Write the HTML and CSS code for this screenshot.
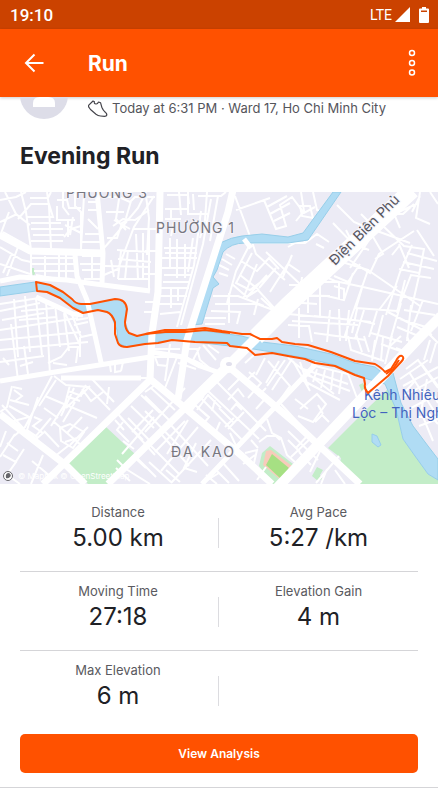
FILE: index.html
```html
<!DOCTYPE html>
<html lang="en">
<head>
  <meta charset="UTF-8">
  <meta name="viewport" content="width=device-width, initial-scale=1.0">
  <title>Run</title>
  <link rel="stylesheet" href="styles.css">
</head>
<body>
  <!-- Phone status bar -->
  <div class="status-bar">
    <span class="clock">19:10</span>
    <div class="status-icons">
      <span class="network">LTE</span>
      <svg width="15" height="15" viewBox="0 0 15 15" aria-hidden="true"><path d="M15 0v15H0z" fill="#fff"/></svg>
      <svg class="battery" width="10" height="16" viewBox="0 0 10 16" aria-hidden="true"><path d="M3 0h4v1.500h2q1 0 1 1V15q0 1-1 1H1q-1 0-1-1V2.500q0-1 1-1h2z" fill="#fff"/><path d="M2 3.500h6v1.500H2z" fill="#cb4200"/></svg>
    </div>
  </div>

  <header class="toolbar">
    <button class="icon-button" type="button" aria-label="Back">
      <svg width="20" height="20" viewBox="0 0 20 20" aria-hidden="true"><path d="M19.500 10H2M10.500 1.500L2 10l8.500 8.500" fill="none" stroke="#fff" stroke-width="2"/></svg>
    </button>
    <h1>Run</h1>
    <button class="icon-button" type="button" aria-label="More options">
      <svg width="8" height="28" viewBox="0 0 8 28" aria-hidden="true"><g fill="none" stroke="#fff" stroke-width="1.500"><circle cx="4" cy="4" r="2.500"/><circle cx="4" cy="14" r="2.500"/><circle cx="4" cy="23.500" r="2.500"/></g></svg>
    </button>
  </header>

  <main>
    <!-- Athlete and activity details -->
    <div class="athlete">
      <svg class="avatar" width="48" height="48" viewBox="0 0 48 48" aria-hidden="true"><circle cx="24" cy="24" r="24" fill="#dddde8"/><circle cx="24" cy="17" r="7" fill="#fff"/><path d="M13 36v-4q0-6 7-6h8q7 0 7 6v4z" fill="#fff"/></svg>
      <div class="details">
        <svg width="20" height="17" viewBox="0 0 20 17" aria-hidden="true"><path d="M5 1L.8 5.200q-.6.800 0 2L2.500 9.500 8 14.200q2 1.600 4.500 1.800l4 .3q2 0 2.300-1.300.2-1.300-1.300-2.500Q14.800 10 13.800 7.200L12.600 2.800 10.500 2Q9.500 4.200 8 4 5.800 3.800 6.400 1.800z" fill="none" stroke="#44444b" stroke-width="1.200" stroke-linejoin="round"/></svg>
        <span>Today at 6:31 PM · Ward 17, Ho Chi Minh City</span>
      </div>
    </div>
    <h2 class="title">Evening Run</h2>

    <svg class="map" viewBox="0 0 438 292" role="img" aria-label="Route map">
      <rect width="438" height="292" fill="#ecebf5"/>

      <!-- Parks -->
      <g fill="#c3edc8">
        <path d="M106 235l30 28-24 29H88l-21-21z"/>
        <path d="M328 256L370 214 388 197 396 217 403 247 428 282 438 288V292H360L340 271 341 266z"/>
        <path d="M270 254l23 18-11 20h-10l-13-18 3-13z"/>
        <path d="M317 275l6 3-3 5 2 4-4 2-6-5z"/>
        <path d="M359 193l4-2 3 6-4 3z"/>
      </g>
      <path d="M266 259l5-1 21 16v7l-10 8-19-16z" fill="#f8cbbb"/>
      <path d="M272 262l17 14-8 11-15-14z" fill="#a6e083"/>
      <path d="M31 76h3l1 6-2 2z" fill="#c3edc8"/>

      <!-- Side streets -->
      <g class="streets">
        <!-- north west -->
        <path d="M0 8l16-3 10-5M5 0l11 22 14 11M17 22L0 30M0 44l9-24M21 0l5 20 5 38M18 27l13-15h18l4 13H26M30 6h18l3-6M47 0l2 14 2 42M31 31h30M31 37h32M33 43h31M31 49h32M63 0v15l6 8M57 8h10l2 8h12M75 0v14l6 6v35M65 33l16 8M64 45l7-8 10-3M68 29v16M73 25l-3 18M84 3l-3 54M88 10h10M88 18h9M88 27l10 10M85 42h15M82 50h19M57 14v14h18"/>
        <path d="M3 40l27 15M0 55l22 13 9 2M18 55L7 84M12 61l-9 20M0 72l30 10M31 61v24M31 66h44M31 72h44M34 79h42M45 64v20M59 62v24M66 63v24M82 64h20M80 72h21M82 78h20M92 64v22M84 87h19M36 83l27 5"/>
        <path d="M104 5h15l11 5 5-5h20M106 20h18M119 7l-3 20 10 11M114 28l16 9M113 34l10-7 12 1 14-10M131 9l-5 17M112 47l26-31 9-18M107 46h10l5-15 8-4M104 56l8-9M104 83l14-6 16-42 20-31M133 37h25M117 58l33 2M118 67l33 3M105 74l45 1M111 68l3 17M121 59l-3 28M128 58l-3 29M136 42l2 45M143 41v47M149 37v60M118 87h30"/>
        <!-- PHUONG 1 -->
        <path d="M167 3h21l1 9M179 0l2 23M188 0v22h20M193 2l1 16M198 4h23l5-4M207 0l-2 28-5 18M165 17h22M165 27h16M171 18v10M174 30l-3 14M164 56h33M165 61h32M162 66h35M161 76h32M164 83h27M163 90h26M161 96h28M159 104h28M159 112h23M160 122l20-2M170 46v29M177 47v39M185 52v34M193 46l-5 34M171 96v20M178 95v14M201 19l-7 54-17 62M211 7l-8 45-22 81M218 4l-8 45M146 4l3 22-2 37M145 59h16M144 82h16M145 110h12M144 120h12"/>
        <path d="M235 4l16 43 5 15 29 26M236 18l34-12M264 8l12 29 10-3-6-21 12-8 12 16 11-6M267 15l20-11M270 22l20-11M274 29l16-8M301 0l3 19-8 10M250 52l-14 27-9 32M219 73l10 5M222 67l10 6M226 62l9 5M219 81l9 3M247 51h58l12-9 12 8M241 69l16 10 12-13 10 11M252 61l-16 30 14 7 19-14M240 83l19 15M232 92l15 13 20-22M247 105l11-7 17 19M266 60l35 33M257 72l-14 35M276 76l-17 20M270 100l18-28 12 8M292 63l-10 24M213 104h25l26 10M215 112h42l19 7M211 119l29 1-3 12M229 101v30M258 107l-4 16M274 118l-13-12M205 126h21M205 132h20"/>
        <!-- north east -->
        <path d="M300 14l10 0 3 12-11-2zM313 0l4 18 7 2M322 23l-18 27M316 52l8 4M288 55l23-13M337 13l17 17 19 8M333 31l20 21 16 6M361 22l15 15M355 56l-9-18M350 76l32-47 13-5 5 12M346 66l24 15 9-19 35-23M369 38l14 24-8 5M381 32l23 22 20 3-5 26M399 52l10 24M417 38l17 26M412 53l-12 27-14 43M407 61l30 8M403 70l31 7M399 77l20 4M392 63l8-10M377 39l33 12M420 0l-4 26 14 6M396 21l23-10M388 22h15l11-10M430 0l8 12M420 4l-8 16"/>
        <path d="M321 83l14 6 28 6 75 17M342 70l26 8-24 68M368 78l52 36M360 72l-12 18-14-6M353 81l-9 27-17-4M334 94l10 3v10M362 96l-6 20 41 3 14-36 20 3M397 94l-18 24M405 88l-8 33M377 119l-8 26M419 84l-8 35M289 93h12l1-8M300 90h39v17M308 87v34M320 94v31l-32-3M288 103l42 1M288 110l29 2M292 129l66 4M288 133l21 1 3 16M314 124l57 6M330 118l-3 32M339 117l1 32M349 118l-3 31M357 117l-5 24M364 118l-9 29M362 129l13 3M314 141l52 7M299 116v30M388 120l44 23M401 111l-11 38M411 113l-4 36M423 108l-12 31M404 118l31 5M400 127l29 9M397 135l26 11M371 141l31 9M383 123l-11 42"/>
        <!-- south west -->
        <path d="M0 112l39-6 25 13 16 34M0 119l40-8M2 128l42-7M0 138l78-12M0 148l81-8M0 158l88-8M14 107l4 58M25 104l5 56M36 107l6 56M46 108l4 75M55 113l5 42M64 121l5 38M21 119l33-3M19 128l38-3M11 132l7 56M0 170l44-6M24 154l4 28M3 166l6 7M20 174l13-4M72 123l9 22 14-3M74 133l14-3M76 128l12-2M80 145v20"/>
        <path d="M52 184l-27 51-11 9M63 186h84M54 184l12 9 22 2 22 23M45 204l52 22M56 188l-17 26M70 193l-5 19-14 22M74 196l-13 28M86 193l-7 11-13 12M66 204l14 5M68 199l14 5M82 197l9 12 12-9M81 203l9-9M92 187l22 23M75 210l-12 20M109 195l-2 17M38 205l-11 33 9 6 15-18M12 194l-5 21-7 5M14 198l8 6-8 6M22 197l-9-2M10 208l19 5M9 214l20 11-19 5M2 213l22 24M34 225l7 3-8 6 10 7-8 7M31 241l7 5M44 216l14 10M53 229l28 24M44 239l15 16M60 236l10-4 14 8-11 16-12-7zM82 225l-15 16M65 250l12-4M6 239L0 255M15 242l-15 23M7 251l11 8M3 263l13 7-10 14M24 257l-9 14M43 263l-12 29M32 269l18 15M54 265l14-11M6 282l14 10M88 235l-18 18M48 171l13-6 8-10h9l-2 16M53 171l14 2M110 173l1 7M115 171v9l6-1M123 170l-2 9"/>
        <!-- middle south -->
        <path d="M128 226l22 23M118 222l37 41M121 226l22 22M131 214l23 22M141 203l19 18M124 238l-9-10M129 250l-12-12 6-8M134 257l-11-8M132 240l21-22M122 262l32-37M146 276l-12-11M126 277l-9-9M130 289l-14-13M137 266l19 19M151 254l28 28M162 243l27 31M170 232l38 42M145 219l36 37M145 204l25 25M151 196l24 22M145 240l40-44M145 200l13-9M155 260l30-31M161 279l37-44M171 291l40-43M188 228l-21 34M196 251l-12 25 13 4M149 270l22 20M180 290l-14-12M206 283l11 9M215 277l14 14M222 270l17 19M219 281l-15 9M150 292l-24-15"/>
        <path d="M151 165h31M151 157h29M155 165l3 8 10 1M170 152l-5 37M177 165l-12 31M187 157h10l3 11 12 10M200 155l-7 13 10 5M203 153l13 15M208 153l11 8M178 171l18 6M197 202l45 46M208 199l51 48M216 189l50 50M197 218l11-15 13 13M192 210l15 14M189 219l15-15M202 219l7 6-5 6M205 199l-13 19M215 208l-3 11M228 208l10-11 6 8M219 216l14 14M231 218l5-6 6 6M220 230l-6 14M225 235l9-9M216 242l18 13M244 220l-16 17M230 241l8 17M239 187l-11 11M249 180l12 11-13 15M255 180l-9 9M238 183l8 9M258 204l8-8M264 208l-8 9M268 169l22 25-15 21M285 168l-18 26M279 169l-13 22M292 167l-20 31M245 171l10-9M265 166l-9 17"/>
        <!-- south east -->
        <path d="M288 166l46 36M293 169l17 30M300 170l8 24M311 173l37 9 9 24M303 177l45 15M307 183l43 16M302 188l38 20M317 177l-4 13M325 178l-4 18M333 179l-2 19M342 181l-3 21M281 212l20 22M300 217l17-15 9 10-13 18-15-6M295 207l13 10M318 213l5 9M315 230l7-7 7 7M288 239l30 29M294 231l15 12M309 242l-13 14M288 248l12 12M291 265l20-19M299 260l12 13M302 268l11-12M321 257l-11 23M339 264l-23 27M335 278l10 14M327 277l-6 15M267 227l5 14 9 5 6 17 8 7M259 250l8-6h9l4 4M245 261l12-3-3 13M243 272l12-9M257 288l9-13M251 248l7 8M262 281l10 11"/>
        <path d="M348 144l3 14 15 5 18 6M356 142l6 18M364 144l5 16M375 148l-3 21M383 145l-2 23M392 144l-7 28M401 144l-12 11M396 156l10 4M381 152l22 8M407 145l4 8M406 177l12-9 20 28M400 187l28-19M403 194l35-19M404 204l34-19M411 216l23-12M409 180l27 42M414 190l-8 9M421 171l17 23M427 187l-6 33 12 29M418 225h20M419 234l19-7M429 222l9 10M433 202l5 9M430 148l-6 20M436 151l-6 20M429 142l9 9"/>
      </g>

      <!-- Water -->
      <g fill="#b0dcf4" stroke="#97cee9" stroke-width="1">
        <path d="M0 95L35 90 50 93 63 100 76 111 90 112 100 110 115 107Q125 107 126 117L125 130 129 141 137 144 165 141 205 139 242 144 262 150 295 154 331 162 355 171 375 175 385 183 393 181 401 211 413 234 428 254 438 267V288L428 282 415 264 403 247 396 217 385 192 364 186 335 173 305 166 272 160 247 156 230 154 195 150 172 148 145 152 127 155 118 151 117 138 110 121 98 118 83 120 73 115 60 106 47 100 36 99 0 104z"/>
        <path d="M192 133L208 85 212 68Q215 55 220 51 232 45 242 44L262 42 288 45 303 41 333 0H341L308 48 288 51H245Q231 51 223 60L217 78 213 85 219 92 213 96 202 132z"/>
        <path d="M372 242l5 2 4 9-3 2-6-5z"/>
      </g>

      <!-- Main roads -->
      <g class="roads">
        <path class="medium" d="M97 0l6 61-1 31M0 89l20-4 47 3 21 3 62 8M75 63l2 21 10 24 9 40 6 27M0 189l55-9 95-15M151 160l32 5 17 9 20 7M202 292l93-98 21-22M36 105l37 17 10 1M244 47l7 9M61 186h80"/>
        <path d="M0 43l30 16 73 2M0 222l67 52 18 18M43 292l107-104M160 0l-2 100-6 41-2 46 35 29 57 48 30 28M233-2l-5 22-41 128-9 59M228 174l67 57 65 61M108 292l77-76"/>
        <path class="wide" d="M276 297l145-153 20-20"/>
        <path class="wide" d="M185 216l43-42 34-34"/>
        <path class="avenue" d="M256 145l32-32L412-2"/>
      </g>
      <circle cx="228" cy="173" r="8" fill="#fff"/>
      <ellipse cx="229" cy="172" rx="3" ry="2" fill="#e1e0ed"/>

      <g class="labels">
        <text x="66" y="6" class="district">PHƯỜNG 3</text>
        <text x="156" y="41" class="district">PHƯỜNG 1</text>
        <text x="171" y="265" class="district wide-label">ĐA KAO</text>
        <text x="335" y="74" class="street-name" transform="rotate(-45 335 74)">Điện Biên Phủ</text>
        <text x="364" y="208" class="canal">Kênh Nhiêu</text>
        <text x="352" y="226" class="canal">Lộc – Thị Nghè</text>
        <text x="18" y="287" class="credit">© Mapbox © OpenStreetMap</text>
      </g>

      <!-- Recorded route -->
      <path class="route" d="M36 90L50 93 63 100 72 107Q76 112 81 112L90 112 100 110 115 107Q126 107 127 117L125 130Q125 137 129 141L137 144 150 141 165 138 185 138 205 136 222 139 242 142 250 142 260 147 272 147 277 146 282 150 295 152 308 153 331 160 355 169 375 172Q382 176 385 180L391 177 396 169Q399 163 402 164 405 166 401 170L388 184 368 201Q364 197 365 192L364 186 355 183 335 174 315 171 305 167 288 164 272 161 255 163 247 156 230 154 227 151 195 150 172 148 158 151 145 152 127 155Q120 155 118 151L115 142 115 130Q112 122 107 120L98 118 83 121 73 116 60 106 47 100 37 99z"/>
      <path class="route" d="M145 142L165 140H185L205 138 230 141M386 182L393 177 399 168"/>

      <circle cx="8" cy="284" r="4.500" fill="#fff" stroke="#66666b" stroke-width="1"/>
      <path d="M6 286q-1-5 3-5 3 2 1 4-2 2-4 1z" fill="#66666b"/>
    </svg>

    <!-- Activity stats -->
    <dl class="stats">
      <div class="row">
        <div class="stat"><dt>Distance</dt><dd>5.00 km</dd></div>
        <div class="stat"><dt>Avg Pace</dt><dd>5:27 /km</dd></div>
      </div>
      <div class="row">
        <div class="stat"><dt>Moving Time</dt><dd>27:18</dd></div>
        <div class="stat"><dt>Elevation Gain</dt><dd>4 m</dd></div>
      </div>
      <div class="row">
        <div class="stat"><dt>Max Elevation</dt><dd>6 m</dd></div>
      </div>
    </dl>
    <div class="actions">
      <button class="analysis-button" type="button">View Analysis</button>
    </div>
  </main>
</body>
</html>
```
FILE: styles.css
```css
* {
  box-sizing: border-box;
}
body {
  margin: 0;
  background-color: #fff;
  color: #202126;
  font-family: Inter, "Liberation Sans", sans-serif;
}
h1, h2, dl, dd {
  margin: 0;
}
button {
  border: none;
  font-family: inherit;
  cursor: pointer;
}
svg {
  display: block;
  flex-shrink: 0;
}
.status-bar {
  display: flex;
  justify-content: space-between;
  align-items: center;
  height: 29px;
  padding: 0 9px 0 10px;
  background-color: #cb4200;
  color: #fff;
  font-family: Roboto, sans-serif;
  font-size: 17px;
}
.clock {
  font-weight: 500;
}
.status-icons {
  display: flex;
  align-items: center;
  gap: 3px;
}
.network {
  font-size: 14px;
}
.battery {
  margin-left: 6px;
}
.toolbar {
  display: flex;
  align-items: center;
  height: 68px;
  padding: 0 12px 0 20px;
  background-color: #ff5100;
  color: #fff;
  box-shadow: 0 1px 3px rgba(0, 0, 0, 0.2);
}
.toolbar h1 {
  flex: 1;
  padding-left: 40px;
  font-size: 21px;
  font-weight: 700;
}
.icon-button {
  display: flex;
  justify-content: center;
  align-items: center;
  width: 28px;
  height: 44px;
  padding: 0;
  background: none;
}

/* Athlete row is scrolled partly under the toolbar */
.athlete {
  display: flex;
  align-items: flex-end;
  gap: 20px;
  height: 22px;
  padding: 0 20px;
  overflow: hidden;
}
.details {
  display: flex;
  align-items: center;
  gap: 4px;
  height: 22px;
  color: #55555b;
  font-size: 13px;
  white-space: nowrap;
}
.title {
  padding: 22px 20px 20px;
  font-size: 23px;
  line-height: 31px;
}

/* Map */
.map {
  width: 100%;
  height: auto;
}
.streets {
  fill: none;
  stroke: #fff;
  stroke-width: 2;
}
.roads {
  fill: none;
  stroke: #fff;
  stroke-width: 7;
  stroke-linejoin: round;
}
.medium {
  stroke-width: 5;
}
.wide {
  stroke-width: 10;
}
.avenue {
  stroke-width: 17;
}
.route {
  fill: none;
  stroke: #ff5100;
  stroke-width: 2;
  stroke-linejoin: round;
}
.labels {
  stroke: #f4f3fa;
  stroke-width: 2px;
  paint-order: stroke;
}
.district {
  fill: #77777f;
  font-size: 14px;
  letter-spacing: 1px;
}
.wide-label {
  letter-spacing: 2px;
}
.street-name {
  fill: #55555d;
  font-size: 14px;
}
.canal {
  fill: #4263be;
  stroke: none;
  font-size: 14px;
}
.credit {
  fill: #fff;
  stroke: none;
  font-size: 8px;
}

/* Stats */
.stats {
  padding: 0 20px;
}
.row {
  display: grid;
  grid-template-columns: 1fr 1fr;
  padding: 9px 0 17px;
  border-bottom: 1px solid #d5d5d8;
}
.row:first-child {
  padding-top: 18px;
}
.row:last-child {
  border-bottom: none;
}
.stat {
  padding-right: 3px;
  text-align: center;
  background: linear-gradient(#dcdce0, #dcdce0) right 16px / 1px 30px no-repeat;
}
.stat:nth-child(2) {
  background: none;
  padding-right: 0;
}
.stat dt {
  color: #5a5a60;
  font-size: 13px;
  line-height: 20px;
}
.stat dd {
  font-size: 24px;
  font-weight: 400;
  line-height: 32px;
}
.actions {
  padding: 5px 20px 14px;
  border-bottom: 1px solid #d5d5d8;
}
.analysis-button {
  width: 100%;
  height: 39px;
  border-radius: 5px;
  background-color: #ff5100;
  color: #fff;
  font-size: 12px;
  font-weight: 600;
}
```
